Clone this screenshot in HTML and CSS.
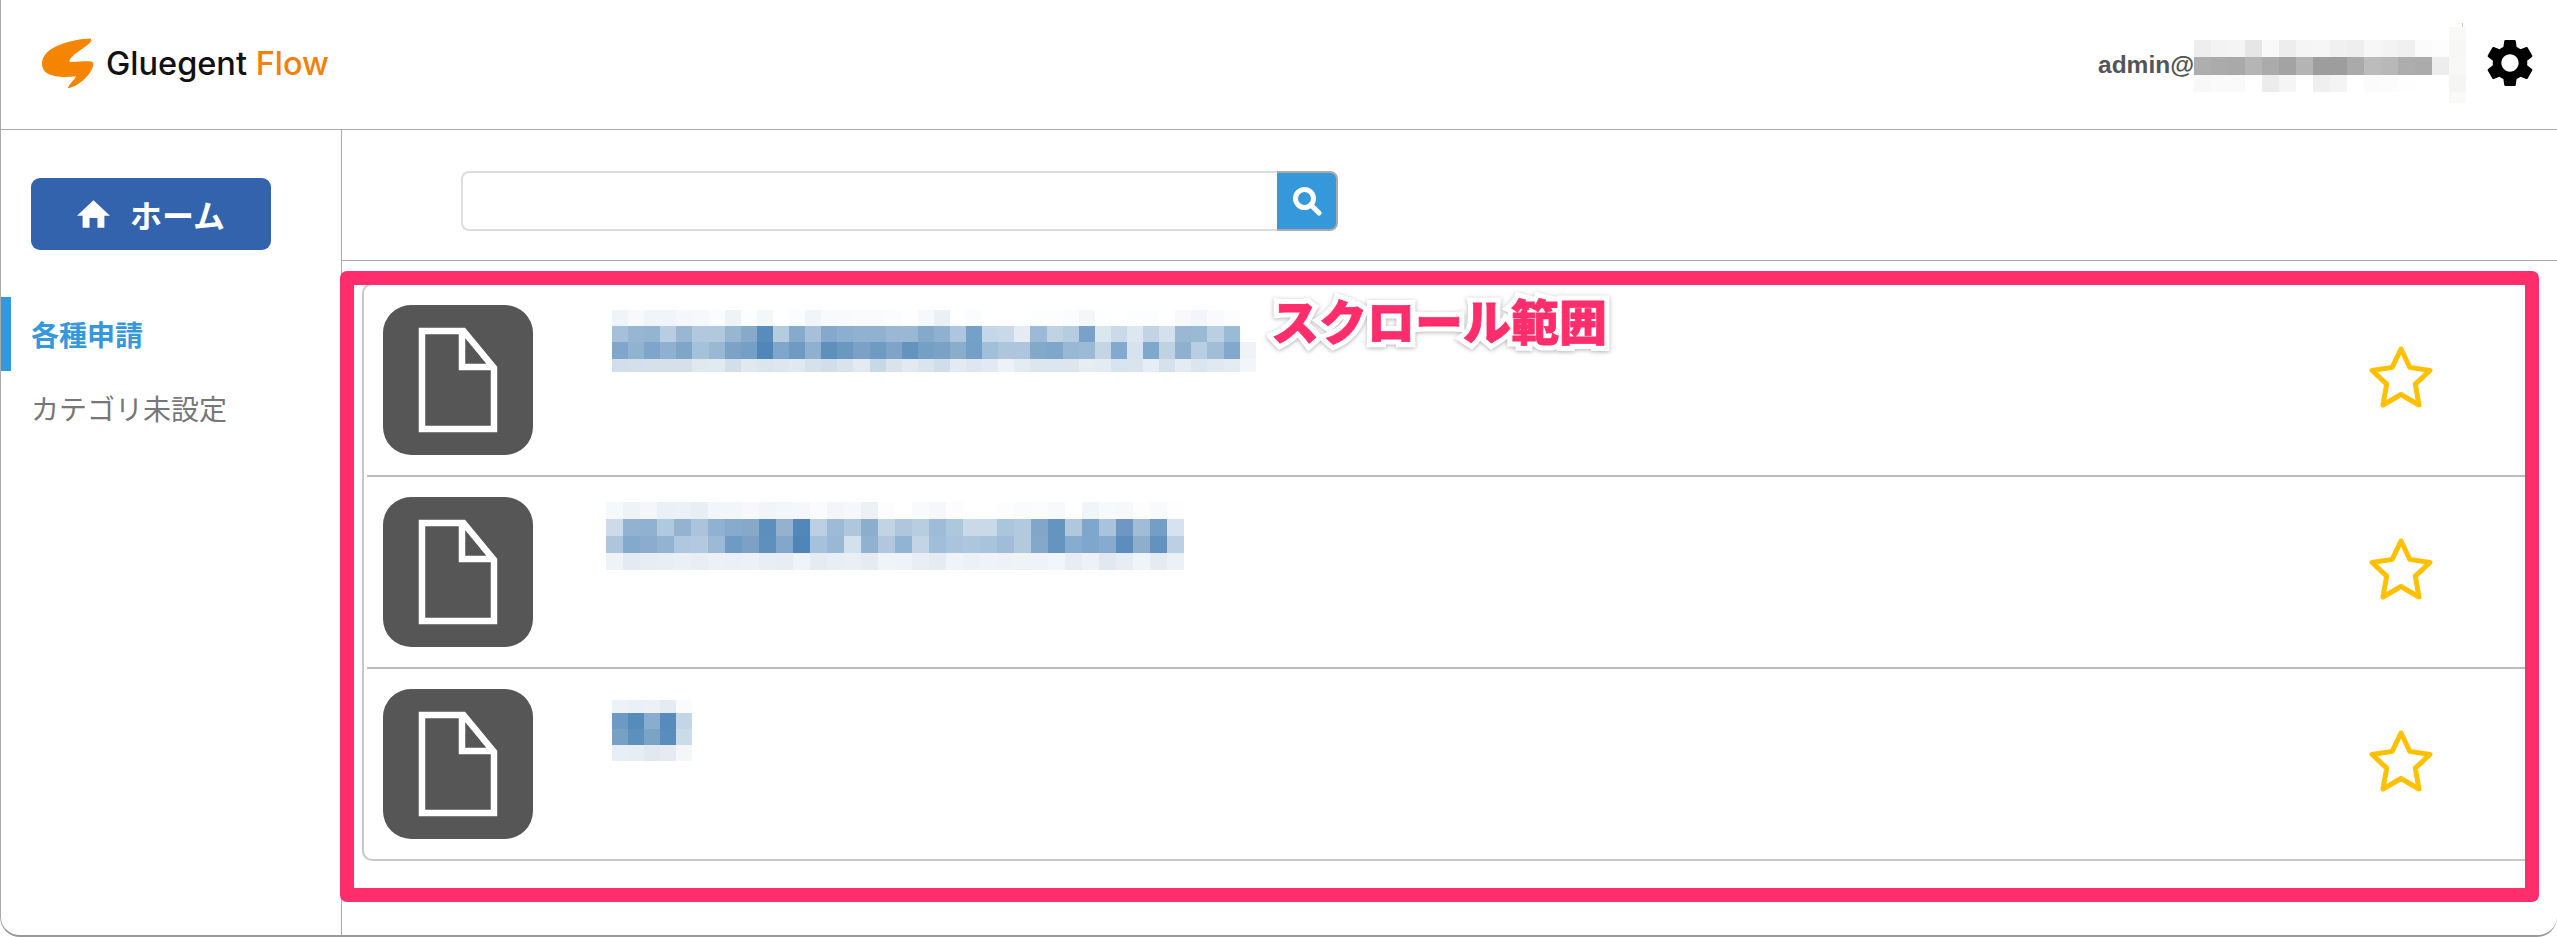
FILE: index.html
```html
<!DOCTYPE html>
<html lang="ja">
<head>
    <meta charset="UTF-8">
    <meta name="viewport" content="width=device-width, initial-scale=1.0">
    <title>Gluegent Flow</title>
    <link rel="stylesheet" href="styles.css">
</head>
<body>
    <div class="app">
        <!-- Header -->
        <header class="header">
            <div class="logo">
                <svg class="logo-mark" viewBox="120 110 160 156">
                    <path d="M270 114C215 116 123 138 123 190C123 227 170 234 226 228C220 241 206 250 200 264C240 257 277 216 278 190C278 182 265 183 250 183L210 185C202 185 207 176 214 169C230 152 264 136 272 121Z"/>
                </svg>
                <span class="logo-text">Gluegent <span class="logo-flow">Flow</span></span>
            </div>
            <div class="user">
                <span class="user-name">admin@</span>
                <div class="mosaic mosaic-user" data-mosaic="user"></div>
                <svg class="gear" viewBox="2.5 2 19 20">
                    <path d="M19.14 12.94c.04-.3.06-.61.06-.94 0-.32-.02-.64-.07-.94l2.03-1.58c.18-.14.23-.41.12-.61l-1.92-3.32c-.12-.22-.37-.29-.59-.22l-2.39.96c-.5-.38-1.03-.7-1.62-.94l-.36-2.54c-.04-.24-.24-.41-.48-.41h-3.84c-.24 0-.43.17-.47.41l-.36 2.54c-.59.24-1.13.57-1.62.94l-2.39-.96c-.22-.08-.47 0-.59.22L2.74 8.87c-.12.21-.08.47.12.61l2.03 1.58c-.05.3-.09.63-.09.94s.02.64.07.94l-2.03 1.58c-.18.14-.23.41-.12.61l1.92 3.32c.12.22.37.29.59.22l2.39-.96c.5.38 1.03.7 1.62.94l.36 2.54c.05.24.24.41.48.41h3.84c.24 0 .44-.17.47-.41l.36-2.54c.59-.24 1.13-.56 1.62-.94l2.39.96c.22.08.47 0 .59-.22l1.92-3.32c.12-.22.07-.47-.12-.61l-2.01-1.58zM12 15.6c-1.98 0-3.6-1.62-3.6-3.6s1.62-3.6 3.6-3.6 3.6 1.62 3.6 3.6-1.62 3.6-3.6 3.6z"/>
                </svg>
            </div>
        </header>

        <div class="body">
            <!-- Sidebar -->
            <aside class="sidebar">
                <button class="home-btn">
                    <svg class="home-icon" viewBox="233 598 100 84">
                        <path d="M283 598L333 645H316V682H295V652H271V682H250V645H233Z"/>
                    </svg>
                    ホーム
                </button>
                <nav class="nav">
                    <div class="nav-item active">各種申請</div>
                    <div class="nav-item">カテゴリ未設定</div>
                </nav>
            </aside>

            <main class="main">
                <!-- Search -->
                <div class="search">
                    <input class="search-input" type="text">
                    <button class="search-btn">
                        <svg class="search-icon" viewBox="0 0 30 30">
                            <circle cx="12.5" cy="12.5" r="9"/>
                            <line x1="19" y1="19" x2="27" y2="27"/>
                        </svg>
                    </button>
                </div>

                <!-- Form list -->
                <div class="list-area">
                    <div class="card">
                        <div class="row">
                            <div class="doc-icon">
                                <svg viewBox="0 0 150 150"><path d="M39 26H80.5L111 63V124H39ZM79 26V62H111"/></svg>
                            </div>
                            <div class="mosaic mosaic-a" data-mosaic="a"></div>
                            <svg class="star" viewBox="0 0 66 63"><path d="M33 3L41.8 21.4L62 24.5L47.3 38.1L51 59L33 48.5L15 59L18.7 38.1L4 24.5L24.2 21.4Z"/></svg>
                        </div>
                        <div class="row">
                            <div class="doc-icon">
                                <svg viewBox="0 0 150 150"><path d="M39 26H80.5L111 63V124H39ZM79 26V62H111"/></svg>
                            </div>
                            <div class="mosaic mosaic-b" data-mosaic="b"></div>
                            <svg class="star" viewBox="0 0 66 63"><path d="M33 3L41.8 21.4L62 24.5L47.3 38.1L51 59L33 48.5L15 59L18.7 38.1L4 24.5L24.2 21.4Z"/></svg>
                        </div>
                        <div class="row">
                            <div class="doc-icon">
                                <svg viewBox="0 0 150 150"><path d="M39 26H80.5L111 63V124H39ZM79 26V62H111"/></svg>
                            </div>
                            <div class="mosaic mosaic-c" data-mosaic="c"></div>
                            <svg class="star" viewBox="0 0 66 63"><path d="M33 3L41.8 21.4L62 24.5L47.3 38.1L51 59L33 48.5L15 59L18.7 38.1L4 24.5L24.2 21.4Z"/></svg>
                        </div>
                    </div>

                    <!-- Annotation drawn over the list -->
                    <div class="frame">
                        <span class="frame-label" data-text="スクロール範囲">スクロール範囲</span>
                    </div>
                </div>
            </main>
        </div>
    </div>

    <script src="script.js"></script>
</body>
</html>
```

FILE: styles.css
```css
* {
    margin: 0;
    padding: 0;
    box-sizing: border-box;
}

html, body {
    height: 100%;
}

body {
    font-family: "Noto Sans CJK JP", "Liberation Sans", sans-serif;
    background: #fff;
    overflow: hidden;
}

.app {
    height: 937px;
    display: flex;
    flex-direction: column;
    border-left: 1px solid #aaa;
    border-bottom: 2px solid #999;
    border-radius: 0 0 20px 20px;
    overflow: hidden;
}

/* Header */
.header {
    height: 130px;
    flex: none;
    display: flex;
    align-items: center;
    justify-content: space-between;
    padding: 0 23px 0 40px;
    border-bottom: 1px solid #aaa;
}

.logo {
    display: flex;
    align-items: center;
    gap: 12px;
    margin-top: -3px;
}

.logo-mark {
    width: 53px;
    height: 52px;
    fill: #f58400;
}

.logo-text {
    font-family: Inter, sans-serif;
    font-size: 32.5px;
    font-weight: 500;
    color: #111;
}

.logo-flow {
    color: #f57f0a;
}

.user {
    display: flex;
    align-items: center;
    position: relative;
}

.user-name {
    font-family: "Liberation Sans", sans-serif;
    font-size: 24.5px;
    font-weight: bold;
    color: #555;
    width: 96px;
    white-space: nowrap;
}

.gear {
    width: 48px;
    height: 48px;
    margin-left: 20px;
    margin-top: -3px;
    fill: #000;
}

/* Blurred-out text */
.mosaic {
    display: grid;
    flex: none;
    position: relative;
}

.mosaic-user {
    grid-template-rows: 13px 17.5px 17.5px 17px 11px;
    grid-auto-columns: 17px;
    grid-auto-flow: column;
}

.mosaic-user::after {
    content: "";
    position: absolute;
    left: 268px;
    top: -4px;
    width: 1px;
    height: 4px;
    background: #ccc;
}

.mosaic-a {
    grid-template-rows: 16px 16px 17px 13px;
    grid-auto-columns: 16.1px;
    grid-auto-flow: column;
    margin: 25px 0 0 79px;
}

.mosaic-b {
    grid-template-rows: 17px 17px 17px 17px;
    grid-auto-columns: 17px;
    grid-auto-flow: column;
    margin: 25px 0 0 73px;
}

.mosaic-c {
    grid-template-rows: 13px 16px 16px 16px;
    grid-auto-columns: 16px;
    grid-auto-flow: column;
    margin: 31px 0 0 79px;
}

/* Sidebar */
.body {
    flex: 1;
    display: flex;
    min-height: 0;
}

.sidebar {
    width: 341px;
    flex: none;
    border-right: 1px solid #aaa;
    padding-top: 48px;
}

.home-btn {
    width: 240px;
    height: 72px;
    margin-left: 30px;
    display: flex;
    align-items: center;
    justify-content: center;
    gap: 20px;
    background: #3463ad;
    color: #fff;
    border: none;
    border-radius: 9px;
    font-family: inherit;
    font-size: 32px;
    font-weight: bold;
}

.home-icon {
    width: 33px;
    height: 28px;
    fill: #fff;
}

.nav {
    margin-top: 47px;
}

.nav-item {
    height: 74px;
    display: flex;
    align-items: center;
    padding-left: 30px;
    font-size: 28px;
    color: #777;
}

.nav-item.active {
    border-left: 10px solid #3498db;
    padding-left: 20px;
    font-weight: bold;
    color: #3498db;
}

/* Search */
.main {
    flex: 1;
    min-width: 0;
}

.search {
    height: 131px;
    display: flex;
    align-items: flex-start;
    padding: 41px 0 0 119px;
    border-bottom: 1px solid #aaa;
}

.search-input {
    width: 816px;
    height: 60px;
    border: 2px solid #ddd;
    border-right: none;
    border-radius: 8px 0 0 8px;
    outline: none;
}

.search-btn {
    width: 61px;
    height: 60px;
    display: flex;
    align-items: center;
    justify-content: center;
    background: #3498db;
    border: none;
    border-top: 2px solid #aaa;
    border-right: 2px solid #aaa;
    border-bottom: 2px solid #aaa;
    border-radius: 0 8px 8px 0;
}

.search-icon {
    width: 30px;
    height: 30px;
    fill: none;
    stroke: #fff;
    stroke-width: 5;
    stroke-linecap: round;
}

/* List */
.list-area {
    position: relative;
    padding: 22px 27px 0 20px;
}

.card {
    border: 2px solid #c8c8c8;
    border-right: none;
    border-radius: 10px 0 0 10px;
}

.row {
    height: 192px;
    margin-left: 3px;
    display: flex;
    align-items: flex-start;
    border-bottom: 2px solid #bbb;
}

.row:last-child {
    height: 190px;
    border-bottom: none;
}

.doc-icon {
    width: 150px;
    height: 150px;
    flex: none;
    margin: 20px 0 0 16px;
    background: #565656;
    border-radius: 28px;
}

.doc-icon svg {
    display: block;
    width: 150px;
    height: 150px;
    fill: none;
    stroke: #fff;
    stroke-width: 6.5;
}

.star {
    width: 66px;
    height: 63px;
    flex: none;
    margin: 61px 96px 0 auto;
    fill: none;
    stroke: #ffc000;
    stroke-width: 5;
    stroke-linejoin: round;
}

/* Annotation */
.frame {
    position: absolute;
    left: -2px;
    top: 10px;
    width: 2199px;
    height: 631px;
    border: 14px solid #ff2d6b;
    border-radius: 7px;
}

.frame-label {
    position: absolute;
    left: 917px;
    top: 2px;
    font-size: 48px;
    font-weight: 900;
    line-height: 64px;
    white-space: nowrap;
    color: #ff2d6b;
    -webkit-text-stroke: 0.8px #ff2d6b;
    isolation: isolate;
    filter: drop-shadow(0 1px 2px rgba(0, 0, 0, 0.3));
}

.frame-label::before {
    content: attr(data-text);
    position: absolute;
    left: 0;
    top: 0;
    z-index: -1;
    -webkit-text-stroke: 11px #fff;
}
```

FILE: script.js
```js
// Pixelated text blocks, one array per row of cells ('' = empty cell)
const mosaics = {
    user: [
        ['','','','','','','','','','','','','','','','f9f9f7'],
        ['eeeeee','f3f3f3','f4f4f4','e6e6e6','f9f9f9','ededed','f5f5f5','f6f6f6','f0f0f0','eeeeee','f7f7f7','f3f3f3','f0f0f0','fbfbfb','fdfdfd','f7f7f5'],
        ['aeaeae','ababab','a9a9a9','b5b5b5','ababab','a3a3a3','b4b4b4','9d9d9d','9d9d9d','aaaaaa','bcbcbc','b8b8b8','adadad','ababab','ededed','f8f8f6'],
        ['f8f8f8','fafafa','fafafa','ffffff','ececec','f5f5f5','ffffff','efefef','f4f4f4','ffffff','fbfbfb','fcfcfc','fefefe','ffffff','ffffff','f5f5f3'],
        ['','','','','','','','','','','','','','','','f9f9f7']
    ],
    a: [
        ['eff4f9','f7f9fb','f1f4f8','f1f4f8','f5f7fa','f6f8fb','fbfcfd','eff3f7','fcfdfe','f4f7fa','ffffff','fbfcfe','f1f4f8','f8fafc','f8fafc','fafbfd','fafbfd','fbfcfd','fefefe','f6f9fb',
         'ebf0f7','ffffff','fbfcfd','ffffff','ffffff','ffffff','fcfdfe','fdfdfe','fbfcfd','f4f6f8','fdfefe','ffffff','fcfdfe','fcfdfe','ffffff','f7f9fb','f2f5f9','f8fafb','fdfdfe',''],
        ['a5c0da','97b6d3','94b4d1','b8cde2','99b6d2','b1c8de','b2c9dd','98b6d2','87a9ca','588cbb','b4cce0','86aacc','a6c0da','85a9cc','8dafcf','90b1d0','90b1cf','9ab8d4','9ab8d4','85a9cb',
         '8fb1cf','adc5de','74a1c8','c5d6e6','c9d9e7','e4ebf3','9cbad6','bfd3e5','b6cce0','7aa1c8','dae6f0','cbdae9','dde7f0','c2d3e5','d4e1ec','9ab8d4','9ab9d5','bbcfe3','99bbd5',''],
        ['80a6cc','91b3d0','7fa5ca','8fb0d1','7fa5c9','a6c2da','99b8d3','7ca2c7','75a0c5','5086b8','80a6cc','6f9bc2','8fb1cf','5f90bc','6b98c1','7ca1c7','6f9bc2','7fa4c8','6493bf','74a0c5',
         '7aa2c7','89adcb','72a0c6','a2bfd9','adc6de','adc6de','82a8ca','80a6cb','98b8d4','9abad5','c4d6e5','82a9ce','d6e2ed','7fa8cd','bed2e1','8fb1cf','b8cee3','a2bed7','82a8cd','eff3f8'],
        ['d2dfeb','d3dfea','d5e0ea','d5e0eb','d5e0ea','e0e8f0','e1e9f1','d2deea','e1e8f0','dbe5ee','dee6ef','e0e8f1','d5e1ec','d1deea','d9e3ed','e3eaf1','c7d8e6','dae3ed','e2e9f0','dbe4ee',
         'd0deea','e3eaf3','dee7f1','e2e9f2','edf2f7','e4ebf3','dde6ef','dce6f0','dde6ef','e8edf3','e5ebf2','d7e3ee','d9e4ef','e7edf4','d5e1ec','e4ebf3','dbe5ef','e0e8f0','e4ebf3','f2f5f9']
    ],
    b: [
        ['f6f9fc','eff3f8','f4f6fa','eaf0f7','ecf1f7','e8eef5','f2f5f9','f3f6f9','f6f8fb','f1f5f9','f3f6fa','f5f8fa','f9fbfd','f3f5f9','f5f7fa','edf1f6','fdfdfd',
         'ffffff','f8fafc','f5f7fa','fcfcfe','ffffff','ffffff','fdfdfe','f9fbfc','fbfcfd','f8f9fb','ffffff','f1f4f8','f7fafc','f6f8fa','fdfdfe','f8fafc','fefefe'],
        ['cddbe8','93b2d2','90b1d0','b1c9df','93b3d1','abc4dc','91b1d1','86abcd','86a9ca','5b8fbc','94b2d0','5288b9','bdcfe3','9dbbd6','afc7dc','8caecd','c2d3e4',
         'b0c6dc','b9cde1','9ebcd7','adc7dd','c9d9e7','c9d9e7','aac6dc','b3c9de','81a6ca','6595bf','b1c7de','7fa6cc','a9c3dc','6e98c1','a0bcd6','739fc6','d6e2ef'],
        ['aec5de','83a9cc','8bacce','92b3d1','afc7df','b3c9df','9cbad6','6e9bc3','7da1c5','5d90bd','82a7cb','4f85b8','a6c2da','99b8d4','d3e1ec','90b2d0','b0c7de',
         '90b4d3','c3d5e5','a0bed8','a9c4dc','abc6dd','a9c3dc','a1bcd8','b2c9de','83a8ca','6595bf','88acd0','7fa7cc','87abcf','5c8dbc','8dafcd','6492bf','bdcfe2'],
        ['eff3f8','e3eaf3','e8edf4','e9eef5','ebf0f6','e9eef5','edf1f7','ecf0f6','edf1f7','e9eef6','e8edf5','f0f4f8','e5ebf3','e9eef5','eaeff5','e6ebf3','f0f4f7',
         'eff2f8','e9eef4','e5ebf2','f0f3f9','ecf1f6','eff2f8','eef2f7','f0f3f6','eff2f8','f2f5f9','e8edf5','eef1f6','e1e8f2','e8edf4','f0f4f8','e5eaf3','ecf1f7']
    ],
    c: [
        ['edf2f8','eaf0f8','ecf1f8','e5ebf3','fafbfc'],
        ['6b9ac5','568cbb','89adcf','568bbc','c4d6e6'],
        ['76a1c5','5e90bc','79a4c6','5a8dbb','c9dce8'],
        ['e8eef6','e7edf5','e1e8f1','e6ebf3','f4f7fa']
    ]
};

document.querySelectorAll('[data-mosaic]').forEach(function(el) {
    const rows = mosaics[el.dataset.mosaic];
    rows.forEach(function(row, r) {
        row.forEach(function(color, c) {
            const cell = document.createElement('div');
            cell.style.gridRow = r + 1;
            cell.style.gridColumn = c + 1;
            if (color) cell.style.background = '#' + color;
            el.appendChild(cell);
        });
    });
});
```
